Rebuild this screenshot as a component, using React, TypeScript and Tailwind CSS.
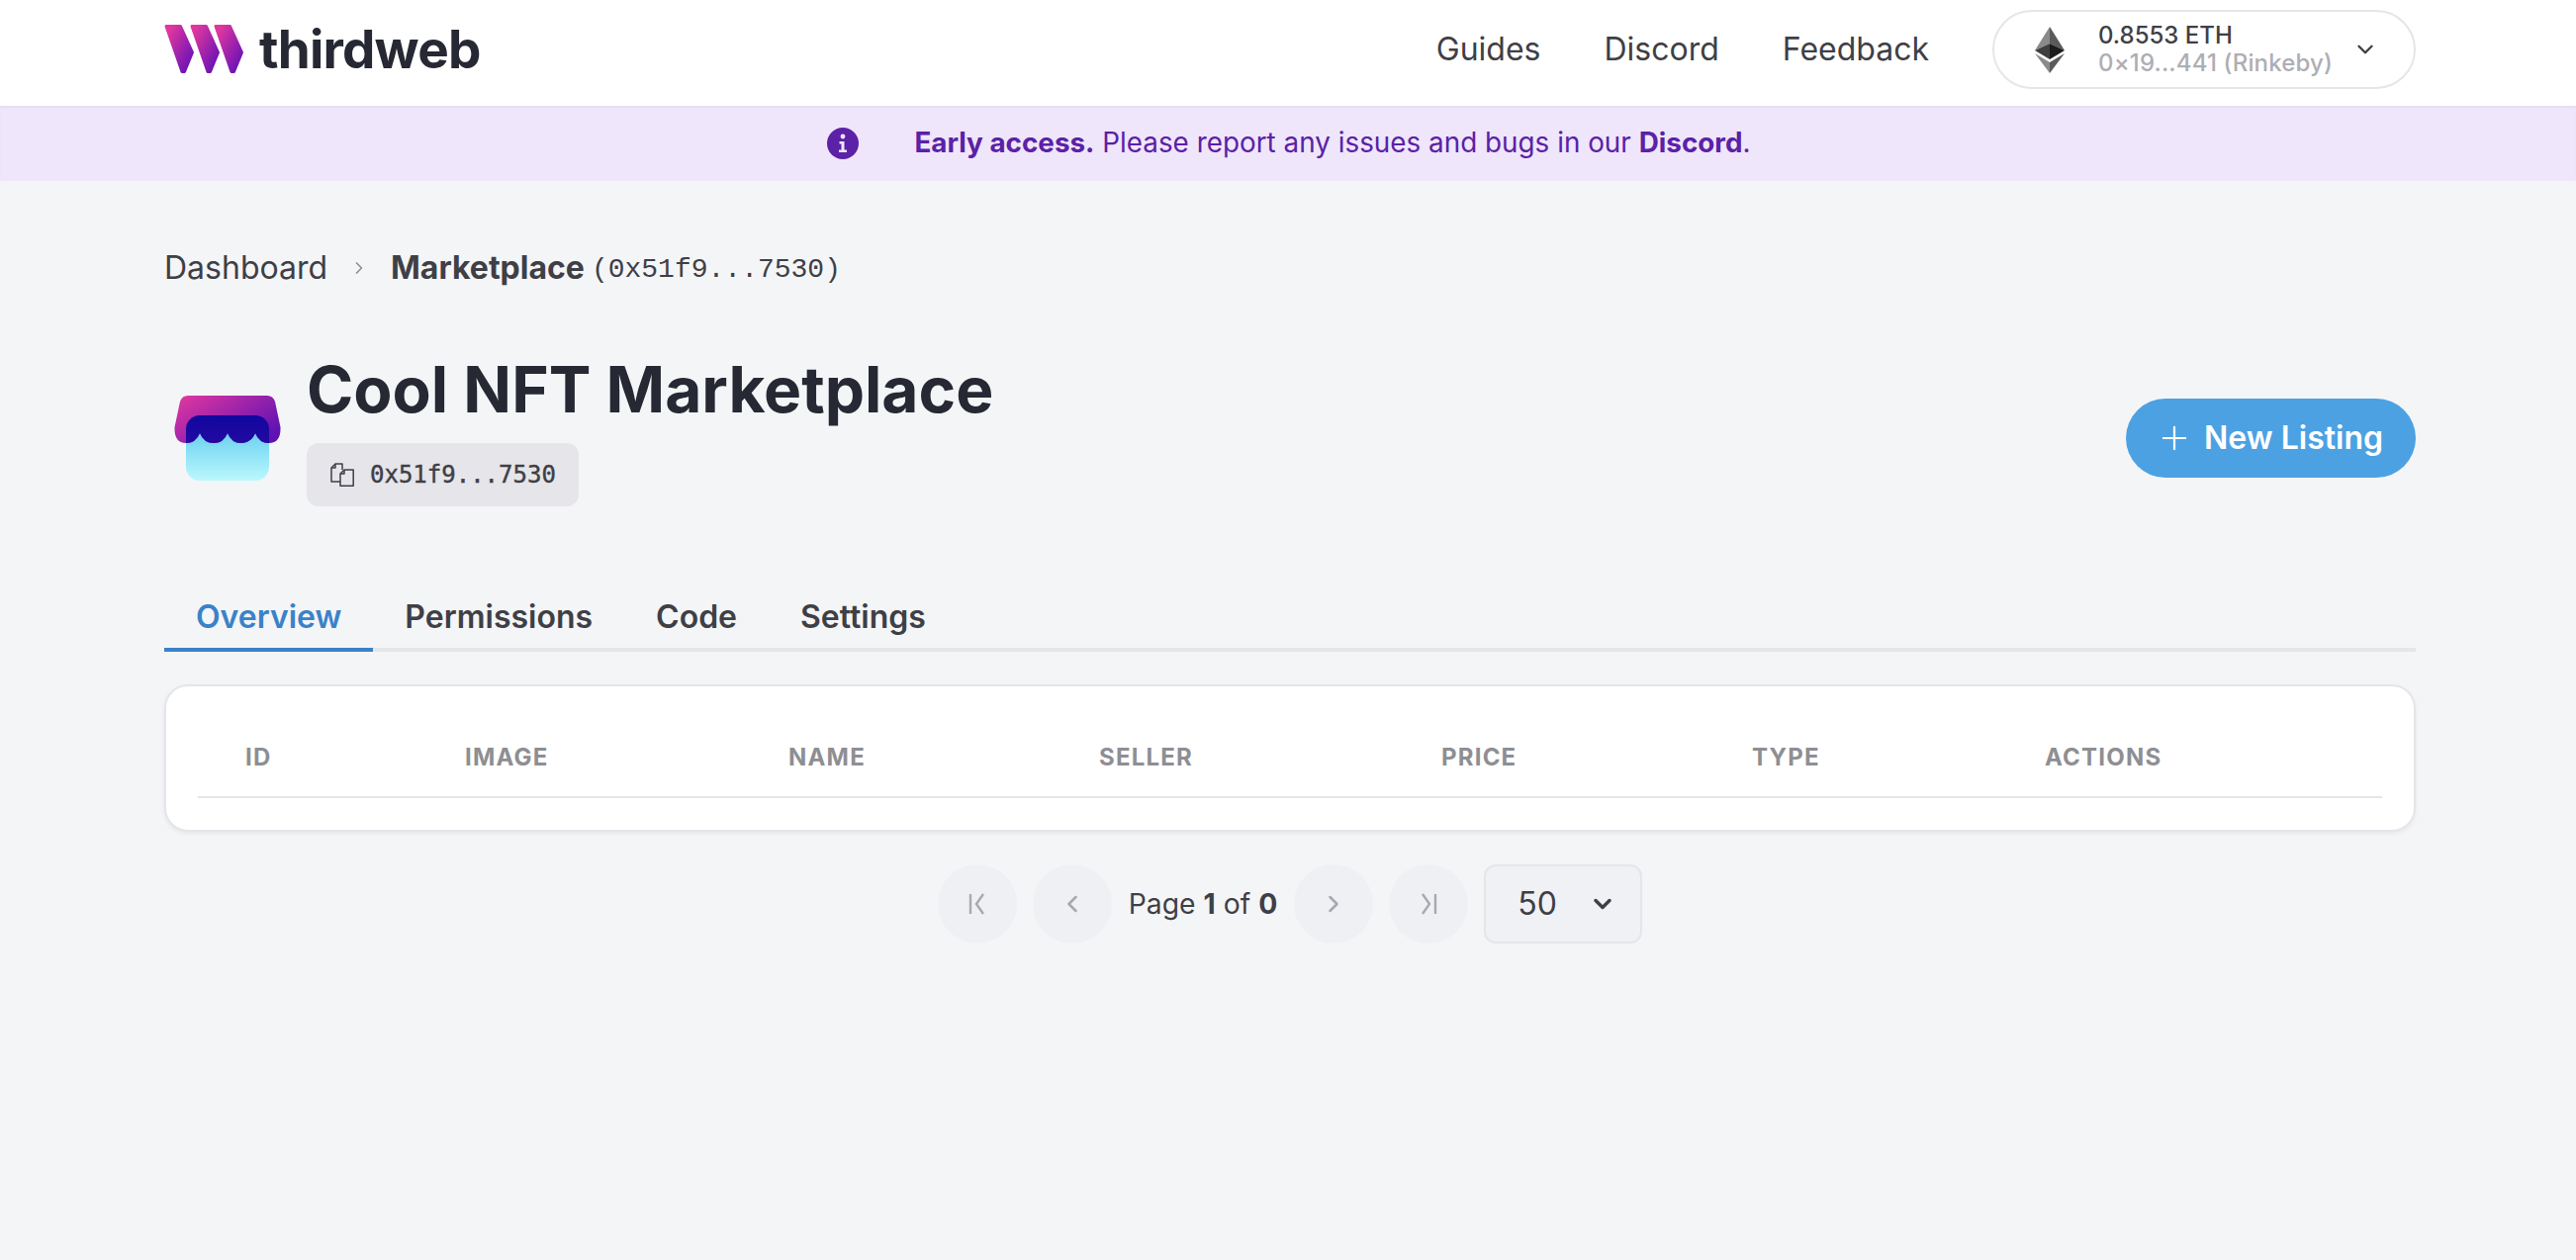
import React from "react";
import { ChevronDown, ChevronLeft, ChevronRight, Plus } from "lucide-react";

const columns = ["ID", "IMAGE", "NAME", "SELLER", "PRICE", "TYPE", "ACTIONS"];
const tabs = ["Overview", "Permissions", "Code", "Settings"];

function Logo() {
  return (
    <svg width="82" height="52" viewBox="0 -1 82 52" fill="none">
      <defs>
        <linearGradient id="mark" x1="0" y1="0" x2="1" y2="1">
          <stop offset="0.1" stopColor="#e0379f" />
          <stop offset="0.9" stopColor="#6a12b6" />
        </linearGradient>
      </defs>
      {[0, 26, 50].map((x) => (
        <path
          key={x}
          transform={`translate(${x} 0)`}
          d="M2 1.5 H16.5 L28.5 28 L20.5 47.5 H18 Z"
          fill="url(#mark)"
          stroke="url(#mark)"
          strokeWidth="3"
          strokeLinejoin="round"
        />
      ))}
    </svg>
  );
}

function EthIcon() {
  return (
    <svg width="30" height="47" viewBox="0 0 30 47">
      <polygon points="15,0 0,24 15,17" fill="#8a8a8a" />
      <polygon points="15,0 30,24 15,17" fill="#5a5a5a" />
      <polygon points="0,24 15,17 15,33" fill="#3f3f3f" />
      <polygon points="30,24 15,17 15,33" fill="#1c1c1c" />
      <polygon points="0,27 15,47 15,36" fill="#8a8a8a" />
      <polygon points="30,27 15,47 15,36" fill="#5a5a5a" />
    </svg>
  );
}

function InfoIcon() {
  return (
    <svg width="32" height="32" viewBox="0 0 32 32">
      <circle cx="16" cy="16" r="16" fill="#5b21a6" />
      <circle cx="16" cy="9" r="2.4" fill="#efe6fb" />
      <path d="M12.5 14 H17.5 V22.5 H20 V25 H12 V22.5 H14.5 V16.5 H12.5 Z" fill="#efe6fb" />
    </svg>
  );
}

function ShopIcon() {
  const awning =
    "M14 0 H94 Q100 0 102 6 L107.5 32 Q108 48 96 48 Q86 48 82 38 Q78 48 68 48 Q58 48 54 38 Q50 48 40 48 Q30 48 26 38 Q22 48 12 48 Q0 48 0.5 32 L6 6 Q8 0 14 0 Z";
  return (
    <svg width="108" height="86" viewBox="0 0 108 86">
      <defs>
        <linearGradient id="shopBody" x1="0" y1="0" x2="0" y2="1">
          <stop offset="0.3" stopColor="#6ed3f1" />
          <stop offset="1" stopColor="#bbf8fd" />
        </linearGradient>
        <linearGradient id="shopTop" x1="0" y1="0" x2="1" y2="0.7">
          <stop offset="0" stopColor="#e5389f" />
          <stop offset="1" stopColor="#5f12b4" />
        </linearGradient>
        <linearGradient id="shopOverlap" x1="0" y1="0" x2="0" y2="1">
          <stop offset="0" stopColor="#10069e" />
          <stop offset="1" stopColor="#3d10a8" />
        </linearGradient>
        <clipPath id="shopClip">
          <path d={awning} />
        </clipPath>
      </defs>
      <rect x="12" y="20" width="84" height="66" rx="14" fill="url(#shopBody)" />
      <path d={awning} fill="url(#shopTop)" />
      <rect x="12" y="20" width="84" height="66" rx="14" fill="url(#shopOverlap)" clipPath="url(#shopClip)" />
    </svg>
  );
}

function CopyIcon() {
  return (
    <svg width="24" height="24" viewBox="0 0 24 24" fill="none" stroke="#3f3f46" strokeWidth="1.5" strokeLinejoin="round">
      <path d="M10 19 H1 V5 L5 1 H12 V7" />
      <path d="M5 1 V5 H1" />
      <path d="M10 11 L14 7 H23.2 V23.2 H10 Z" />
      <path d="M14 7 V11 H10" />
    </svg>
  );
}

function PageEdgeIcon({ flip }: { flip?: boolean }) {
  return (
    <svg width="20" height="24" viewBox="0 0 20 24" fill="none" stroke="#a8a8ae" strokeWidth="2.4" className={flip ? "rotate-180" : ""}>
      <path d="M3 2 V22" />
      <path d="M16 2 L9 12 L16 22" />
    </svg>
  );
}

function PageButton({ children }: { children: React.ReactNode }) {
  return (
    <div className="flex h-[80px] w-[80px] items-center justify-center rounded-full bg-[#eff0f4]">
      {children}
    </div>
  );
}

export default function App() {
  return (
    <div className="min-h-screen bg-[#f4f5f7] font-['Inter',sans-serif] text-[#3f3f46]">
      <header className="flex h-[107px] items-center justify-between bg-white pb-[7px] pl-[166px] pr-[162px]">
        <div className="flex items-center gap-[14px]">
          <Logo />
          <span className="text-[53px] leading-none font-bold tracking-[-0.015em] text-[#262833]">thirdweb</span>
        </div>
        <div className="flex items-center">
          <nav className="flex items-center gap-[64px] text-[32px] text-[#3f3f46]">
            <span>Guides</span>
            <span>Discord</span>
            <span>Feedback</span>
          </nav>
          <div className="ml-[64px] flex h-[80px] w-[428px] items-center rounded-full border-2 border-[#e5e5ea] pl-[41px] pr-[36px]">
            <EthIcon />
            <div className="ml-[34px] flex flex-col whitespace-nowrap text-[24px] leading-[28px] font-medium">
              <span className="text-[#3f3f46]">0.8553 ETH</span>
              <span className="tracking-[0.006em] text-[#aeaeb4]">0×19...441 (Rinkeby)</span>
            </div>
            <ChevronDown className="ml-auto" size={26} strokeWidth={2.2} />
          </div>
        </div>
      </header>

      <div className="flex h-[76px] items-center justify-center gap-[56px] bg-[#efe6fb] pl-[2px] text-[27.85px] text-[#5b21a6] shadow-[inset_0_2px_2px_rgba(0,0,0,0.04)]">
        <InfoIcon />
        <p>
          <span className="font-bold">Early access.</span> Please report any issues and bugs in our{" "}
          <span className="font-bold">Discord</span>.
        </p>
      </div>

      <main className="pl-[166px] pr-[162px] pt-[64px]">
        <div className="flex h-[48px] items-center text-[32px]">
          <span>Dashboard</span>
          <ChevronRight className="mx-[22px] text-[#8e8e93]" size={20} strokeWidth={2} />
          <span className="font-bold">Marketplace</span>
          <span className="ml-[7px] pt-[4px] font-['Liberation_Mono',monospace] text-[28px]">(0x51f9...7530)</span>
        </div>

        <div className="mt-[59px] flex items-center justify-between">
          <div className="flex items-center gap-[26px] pl-[10px]">
            <ShopIcon />
            <div className="flex flex-col items-start pb-[20px]">
              <h1 className="text-[64px] leading-[80px] font-bold text-[#262833]">Cool NFT Marketplace</h1>
              <div className="mt-[14px] flex h-[64px] w-[275px] items-center gap-[16px] rounded-[12px] bg-[#e5e5ea] pl-[24px]">
                <CopyIcon />
                <span className="font-['DejaVu_Sans_Mono',monospace] text-[24px] text-[#3f3f46] [-webkit-text-stroke:0.4px_#3f3f46]">0x51f9...7530</span>
              </div>
            </div>
          </div>
          <div className="flex h-[80px] w-[293px] items-center justify-center gap-[11px] rounded-full bg-[#4ca1e3] pr-[3px] text-[32px] font-semibold text-white">
            <Plus size={38} strokeWidth={1.4} />
            <span>New Listing</span>
          </div>
        </div>

        <div className="mt-[61px] flex h-[66px] border-b-4 border-[#e5e5ea]">
          {tabs.map((tab, i) => (
            <div
              key={tab}
              className={
                i === 0
                  ? "-mb-[4px] flex items-center border-b-4 border-[#3a82c8] px-[32px] text-[32px] font-semibold text-[#3a82c8]"
                  : "flex items-center px-[32px] text-[32px] font-semibold text-[#3f3f46]"
              }
            >
              {tab}
            </div>
          ))}
        </div>

        <div className="mt-[33px] rounded-[24px] border-2 border-[#e5e5ea] bg-white px-[32px] pt-[32px] pb-[32px] shadow-[0_2px_4px_rgba(0,0,0,0.06)]">
          <div className="grid h-[81px] grid-cols-[222px_327px_314px_346px_314px_296px_1fr] items-center border-b-2 border-[#e5e5ea] pl-[48px] text-[24px] font-bold tracking-[0.05em] text-[#8e8e93]">
            {columns.map((col) => (
              <span key={col}>{col}</span>
            ))}
          </div>
        </div>

        <div className="mt-[33px] flex items-center justify-center gap-[16px]">
          <PageButton>
            <PageEdgeIcon />
          </PageButton>
          <PageButton>
            <ChevronLeft size={28} className="text-[#a8a8ae]" strokeWidth={2.2} />
          </PageButton>
          <span className="px-[1px] text-[28.3px]">
            Page <span className="font-bold">1</span> of <span className="font-bold">0</span>
          </span>
          <PageButton>
            <ChevronRight size={28} className="text-[#a8a8ae]" strokeWidth={2.2} />
          </PageButton>
          <PageButton>
            <PageEdgeIcon flip />
          </PageButton>
          <div className="flex h-[80px] w-[160px] items-center justify-between rounded-[12px] border-2 border-[#e5e5ea] bg-[#f0f1f5] pl-[32px] pr-[24px] text-[32px]">
            <span>50</span>
            <ChevronDown size={28} strokeWidth={3} />
          </div>
        </div>
      </main>
    </div>
  );
}
